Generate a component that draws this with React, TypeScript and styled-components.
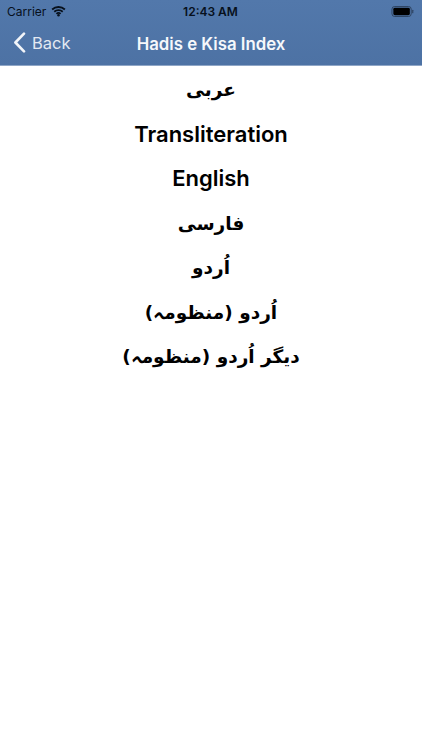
import React from "react";
import styled, { createGlobalStyle } from "styled-components";

const GlobalStyle = createGlobalStyle`
  html, body {
    margin: 0;
    padding: 0;
    background: #fff;
    font-family: Inter, "Liberation Sans", sans-serif;
  }
`;

const Page = styled.div`
  width: 422px;
  height: 750px;
  overflow: hidden;
  display: flex;
  flex-direction: column;
  background: #fff;
`;

const Header = styled.header`
  height: 66px;
  box-sizing: border-box;
  background: linear-gradient(#5278ab, #4d72a4);
  border-bottom: 1px solid #8fa6c6;
  display: flex;
  flex-direction: column;
`;

const StatusBar = styled.div`
  height: 22px;
  display: grid;
  grid-template-columns: 1fr auto 1fr;
  align-items: center;
  padding: 0 8px 0 7px;
  color: #07101c;
  font-size: 12px;
`;

const Carrier = styled.div`
  display: flex;
  align-items: center;
  gap: 5px;
  font-weight: 400;
`;

const Clock = styled.div`
  font-weight: 600;
`;

const Battery = styled.div`
  justify-self: end;
  display: flex;
  align-items: center;
`;

const NavBar = styled.nav`
  flex: 1;
  position: relative;
  display: flex;
  align-items: center;
  justify-content: center;
  color: #fff;
`;

const BackLink = styled.a`
  position: absolute;
  left: 13px;
  top: 10px;
  display: flex;
  align-items: center;
  gap: 6px;
  color: #e3e9f2;
  font-size: 16.5px;
`;

const Title = styled.h1`
  margin: 0;
  font-size: 16.8px;
  font-weight: 600;
  color: #f6f8fb;
`;

const List = styled.ul`
  list-style: none;
  margin: 0;
  padding: 1px 0 0;
`;

const Row = styled.li<{ $arabic?: boolean }>`
  height: 44.6px;
  display: flex;
  align-items: center;
  justify-content: center;
  color: #000;
  font-size: ${(p) => (p.$arabic ? "18.5px" : "22px")};
  font-weight: ${(p) => (p.$arabic ? 700 : 600)};
  font-family: ${(p) =>
    p.$arabic
      ? '"DejaVu Sans", sans-serif'
      : 'Inter, "Liberation Sans", sans-serif'};
`;

const items = [
  { label: "عربی", arabic: true },
  { label: "Transliteration" },
  { label: "English" },
  { label: "فارسی", arabic: true },
  { label: "اُردو", arabic: true },
  { label: "اُردو (منظومہ)", arabic: true },
  { label: "دیگر اُردو (منظومہ)", arabic: true },
];

const WifiIcon = () => (
  <svg width="15" height="12" viewBox="0 0 16 12">
    <path
      d="M1.2 4.4a10 10 0 0 1 13.6 0M3.5 6.8a6.6 6.6 0 0 1 9 0M5.8 9a3.3 3.3 0 0 1 4.4 0"
      fill="none"
      stroke="#07101c"
      strokeWidth="1.9"
    />
    <circle cx="8" cy="10.6" r="1.3" fill="#07101c" />
  </svg>
);

const BatteryIcon = () => (
  <svg width="23" height="11" viewBox="0 0 24 12">
    <rect x="0.5" y="0.5" width="21" height="11" rx="3" fill="none" stroke="#2b3f5c" />
    <rect x="2" y="2" width="18" height="8" rx="1.6" fill="#000" />
    <rect x="22.6" y="4" width="1.2" height="4" rx="0.6" fill="#2b3f5c" />
  </svg>
);

const BackChevron = () => (
  <svg width="13" height="21" viewBox="0 0 13 21">
    <path
      d="M11 1.6 2.4 10.5l8.6 8.9"
      fill="none"
      stroke="#f2f5f9"
      strokeWidth="2.6"
      strokeLinecap="round"
      strokeLinejoin="round"
    />
  </svg>
);

export default function App() {
  return (
    <Page>
      <GlobalStyle />
      <Header>
        <StatusBar>
          <Carrier>
            Carrier <WifiIcon />
          </Carrier>
          <Clock>12:43 AM</Clock>
          <Battery>
            <BatteryIcon />
          </Battery>
        </StatusBar>
        <NavBar>
          <BackLink>
            <BackChevron />
            Back
          </BackLink>
          <Title>Hadis e Kisa Index</Title>
        </NavBar>
      </Header>
      <List>
        {items.map((item) => (
          <Row key={item.label} $arabic={item.arabic}>
            {item.label}
          </Row>
        ))}
      </List>
    </Page>
  );
}
